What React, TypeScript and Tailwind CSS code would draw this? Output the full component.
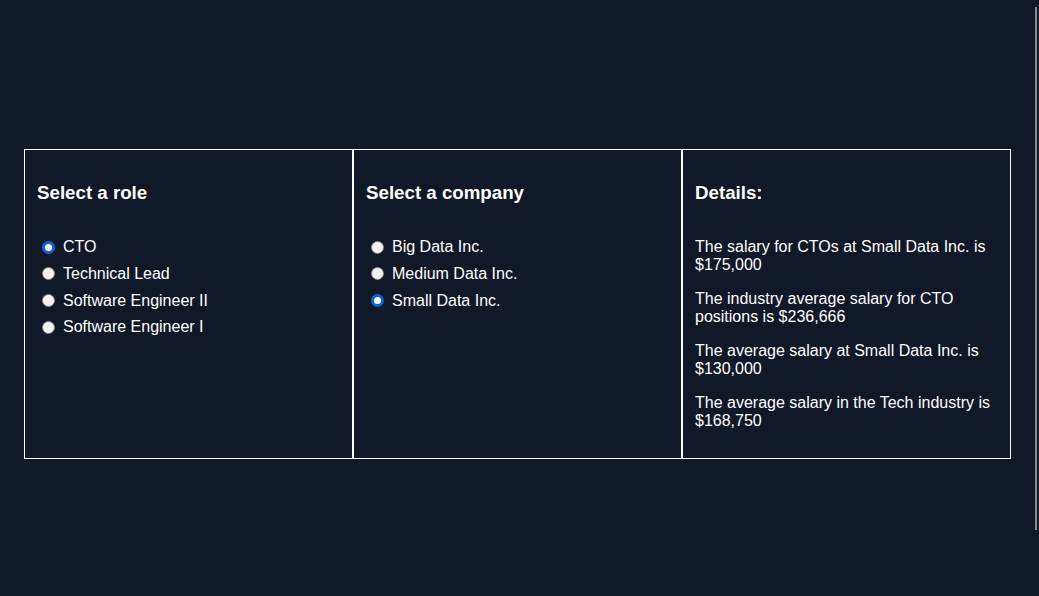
import { useState } from 'react';

const ROLES = ['CTO', 'Technical Lead', 'Software Engineer II', 'Software Engineer I'];
const COMPANIES = ['Big Data Inc.', 'Medium Data Inc.', 'Small Data Inc.'];

const DETAILS = [
  'The salary for CTOs at Small Data Inc. is $175,000',
  'The industry average salary for CTO positions is $236,666',
  'The average salary at Small Data Inc. is $130,000',
  'The average salary in the Tech industry is $168,750',
];

function Panel({ title, children }: { title: string; children: React.ReactNode }) {
  return (
    <div className="flex flex-col border border-white p-3">
      <h3 className="mt-[19.5px] mb-[18.72px] text-[18.72px] font-bold leading-[21.5px] text-white">{title}</h3>
      <div>{children}</div>
    </div>
  );
}

function RadioList({
  name,
  options,
  value,
  onChange,
}: {
  name: string;
  options: string[];
  value: string;
  onChange: (v: string) => void;
}) {
  return (
    <div className="mt-[15.5px] flex flex-col gap-[6.67px]">
      {options.map((opt) => (
        <label key={opt} className="flex h-5 items-center text-base leading-[18px] text-white">
          <input
            type="radio"
            name={name}
            checked={value === opt}
            onChange={() => onChange(opt)}
            className="m-0 ml-[5px] mr-2 h-[13px] w-[13px] shrink-0 appearance-none rounded-full border-[1.5px] border-[#858585] bg-[#f2f2f2] checked:border-[3.5px] checked:border-[#0b64d8] checked:bg-white"
          />
          {opt}
        </label>
      ))}
    </div>
  );
}

export default function App() {
  const [role, setRole] = useState('CTO');
  const [company, setCompany] = useState('Small Data Inc.');

  return (
    <div
      className="min-h-screen bg-[#111827] pt-[149px] pl-6"
      style={{ fontFamily: '"Liberation Sans", Arial, sans-serif' }}
    >
      <div className="grid w-[987px] grid-cols-3">
        <Panel title="Select a role">
          <RadioList name="role" options={ROLES} value={role} onChange={setRole} />
        </Panel>
        <Panel title="Select a company">
          <RadioList name="company" options={COMPANIES} value={company} onChange={setCompany} />
        </Panel>
        <Panel title="Details:">
          {DETAILS.map((d) => (
            <p key={d} className="my-4 text-base leading-[18px] text-white">
              {d}
            </p>
          ))}
        </Panel>
      </div>

      {/* thin overlay scrollbar on the right edge */}
      <div className="fixed top-[7px] right-[2px] h-[523px] w-[2px] bg-[#8b8b8b]" />
    </div>
  );
}
